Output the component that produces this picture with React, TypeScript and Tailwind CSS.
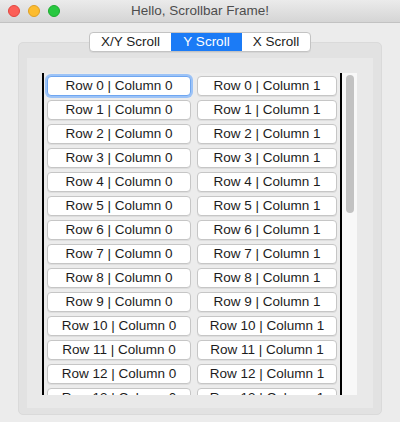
const rows = Array.from({ length: 18 }, (_, i) => i);

function CellButton({ label, width, focused }: { label: string; width: string; focused?: boolean }) {
  return (
    <div
      className={`${width} h-[20px] shrink-0 flex items-center justify-center rounded-[4px] bg-white text-[13.5px] leading-none text-[#1c1c1c] ${
        focused
          ? "border border-[#6fa6f0] shadow-[0_0_0_2px_#9cc3f7]"
          : "border border-[#c6c6c6] shadow-[0_1px_0_rgba(0,0,0,0.06)]"
      }`}
    >
      {label}
    </div>
  );
}

export default function App() {
  return (
    <div
      className="w-[400px] h-[422px] bg-[#ececec] flex flex-col overflow-hidden"
      style={{ fontFamily: '"Liberation Sans", Arial, sans-serif' }}
    >
      {/* Title bar */}
      <div className="h-[23px] shrink-0 flex items-center bg-gradient-to-b from-[#ebebeb] to-[#d5d5d5] border-b border-[#c2c2c2]">
        <div className="w-[70px] flex items-center gap-[8px] pl-[8px]">
          <span className="w-[12px] h-[12px] rounded-full bg-[#fc5f57] border border-[#e2463f]" />
          <span className="w-[12px] h-[12px] rounded-full bg-[#fdbc2e] border border-[#dfa023]" />
          <span className="w-[12px] h-[12px] rounded-full bg-[#28c840] border border-[#1dab2f]" />
        </div>
        <div className="flex-1 text-center text-[13.5px] text-[#4d4d4d]">Hello, Scrollbar Frame!</div>
        <div className="w-[70px]" />
      </div>

      {/* Body */}
      <div className="flex-1 min-h-0 flex flex-col px-[18px] pt-[9px] pb-[7px]">
        {/* Segmented tabs */}
        <div className="relative z-10 flex justify-center shrink-0">
          <div className="flex h-[20px] rounded-[4px] border border-[#c3c3c3] bg-white overflow-hidden text-[13.5px] leading-none shadow-[0_1px_0_rgba(0,0,0,0.05)]">
            <div className="w-[81px] flex items-center justify-center text-[#1c1c1c]">X/Y Scroll</div>
            <div className="w-[71px] flex items-center justify-center bg-[#1b7bf6] text-white">Y Scroll</div>
            <div className="w-[68px] flex items-center justify-center text-[#1c1c1c]">X Scroll</div>
          </div>
        </div>

        {/* Notebook pane */}
        <div className="-mt-[10px] flex-1 min-h-0 flex flex-col rounded-[5px] bg-[#e2e2e2] border border-[#dadada] pt-[15px] px-[8px] pb-[6px]">
          <div className="flex-1 min-h-0 flex flex-col bg-[#e9e9e9] pt-[15px] pl-[15px] pr-[16px] pb-[13px]">
            {/* Canvas with scrollbar */}
            <div className="flex-1 min-h-0 flex">
              <div className="flex-1 flex border-l-2 border-r-2 border-black bg-[#ececec] overflow-hidden">
                <div className="flex flex-col gap-[4px] pt-[3px] pl-[3px]">
                  {rows.map((r) => (
                    <div key={r} className="flex gap-[6px]">
                      <CellButton label={`Row ${r} | Column 0`} width="w-[144px]" focused={r === 0} />
                      <CellButton label={`Row ${r} | Column 1`} width="w-[140px]" />
                    </div>
                  ))}
                </div>
              </div>
              <div className="w-[15px] shrink-0 bg-[#f8f8f8] pt-[2px] pl-[4px] pr-[3px]">
                <div className="h-[138px] rounded-full bg-[#c2c2c2]" />
              </div>
            </div>
          </div>
        </div>
      </div>
    </div>
  );
}
